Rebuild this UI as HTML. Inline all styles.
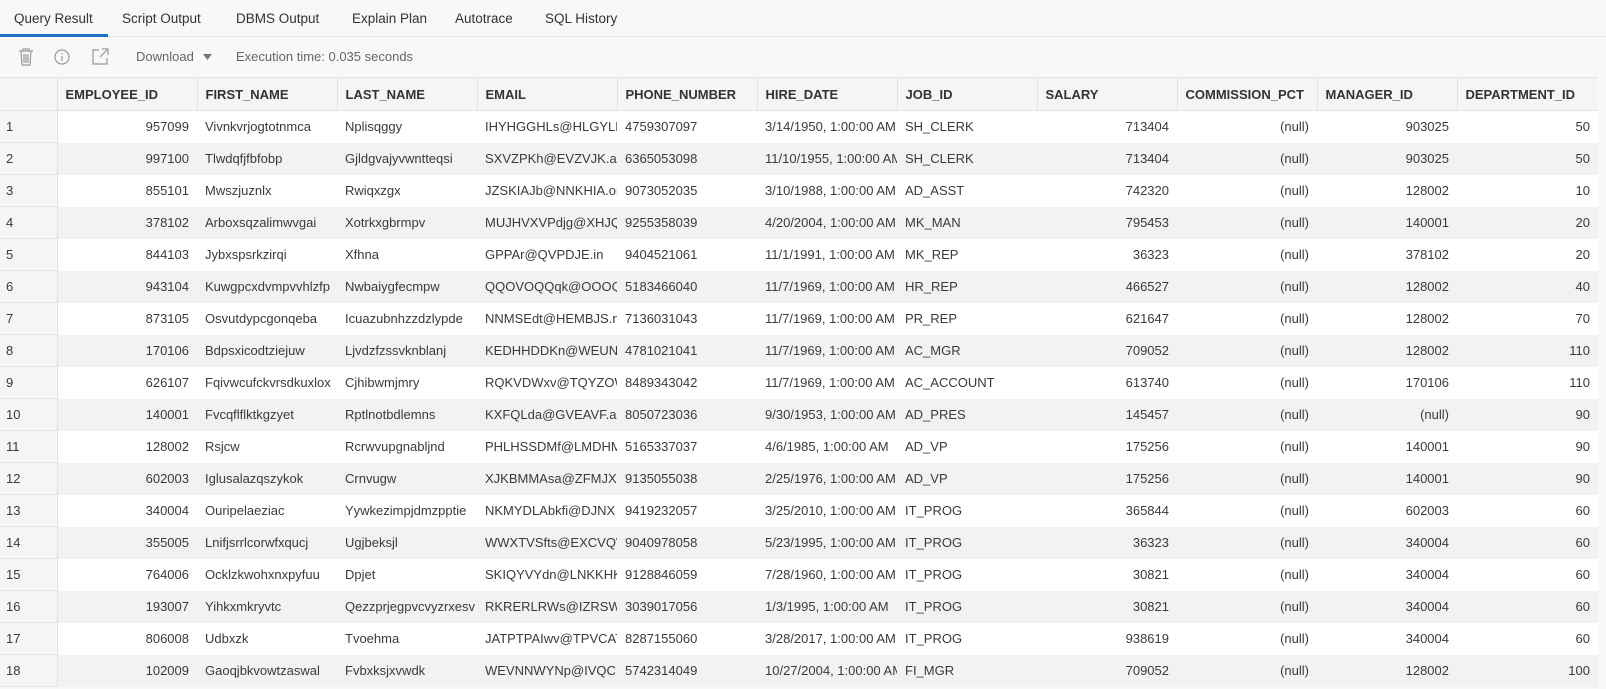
<!DOCTYPE html>
<html><head><meta charset="utf-8"><style>
*{box-sizing:border-box;margin:0;padding:0}
body{width:1606px;height:689px;overflow:hidden;background:#f8f8f8;font-family:"Liberation Sans",sans-serif;color:#333;position:relative}
.tabs{height:37px;border-bottom:1px solid #e4e4e4;position:relative;background:#f8f8f8}
.tab{position:absolute;top:11px;font-size:13.5px;color:#333}
.ul{position:absolute;left:0;top:34px;width:108px;height:3px;background:#1a73c8}
.tb{height:40px;position:relative}
.tb span{position:absolute;top:12px;font-size:13px;color:#666}
table{position:absolute;left:0;top:77px;border-collapse:collapse;table-layout:fixed;width:1598px}
th,td{height:32px;font-size:13px;white-space:nowrap;overflow:hidden;padding:0 8px;text-align:left}
th{background:#f5f5f5;font-weight:bold;color:#333;border-left:1px solid #e2e2e2;border-top:1px solid #e2e2e2;border-bottom:1px solid #e2e2e2;height:33px}
th:first-child{border-left:none}
td{background:#fff;color:#3a3a3a}
tr:nth-child(odd) td{background:#f2f2f2}
td:first-child{background:#f5f5f5 !important;border-bottom:1px solid #e2e2e2;border-right:1px solid #e2e2e2;padding-left:6px}
td.r{text-align:right}
</style></head><body>
<div class="tabs">
<span class="tab" style="left:14px">Query Result</span>
<span class="tab" style="left:122px">Script Output</span>
<span class="tab" style="left:236px">DBMS Output</span>
<span class="tab" style="left:352px">Explain Plan</span>
<span class="tab" style="left:455px">Autotrace</span>
<span class="tab" style="left:545px">SQL History</span>
<div class="ul"></div>
</div>
<div class="tb">
<svg style="position:absolute;left:18px;top:11px" width="16" height="18" viewBox="0 0 16 18" fill="none" stroke="#999" stroke-width="1.2"><path d="M1 3h14M5 3V1h6v2M3 3l1 14h8l1-14M6 6v9M8 6v9M10 6v9"/></svg>
<svg style="position:absolute;left:54px;top:12px" width="16" height="16" viewBox="0 0 16 16" fill="none" stroke="#999" stroke-width="1.2"><circle cx="8" cy="8" r="7"/><path d="M8 7v5M8 4v1.5"/></svg>
<svg style="position:absolute;left:92px;top:11px" width="17" height="17" viewBox="0 0 17 17" fill="none" stroke="#999" stroke-width="1.2"><path d="M7 2H1v14h14v-6M10 1h6v6M16 1L8 9"/></svg>
<span style="left:136px">Download</span>
<svg style="position:absolute;left:203px;top:17px" width="9" height="6"><path d="M0 0h9L4.5 6z" fill="#777"/></svg>
<span style="left:236px">Execution time: 0.035 seconds</span>
</div>
<table>
<colgroup><col style="width:57px"><col style="width:140px"><col style="width:140px"><col style="width:140px"><col style="width:140px"><col style="width:140px"><col style="width:140px"><col style="width:140px"><col style="width:140px"><col style="width:140px"><col style="width:140px"><col style="width:141px"></colgroup>
<tr><th></th><th>EMPLOYEE_ID</th><th>FIRST_NAME</th><th>LAST_NAME</th><th>EMAIL</th><th>PHONE_NUMBER</th><th>HIRE_DATE</th><th>JOB_ID</th><th>SALARY</th><th>COMMISSION_PCT</th><th>MANAGER_ID</th><th>DEPARTMENT_ID</th></tr>
<tr><td>1</td><td class="r">957099</td><td>Vivnkvrjogtotnmca</td><td>Nplisqggy</td><td>IHYHGGHLs@HLGYLHW</td><td>4759307097</td><td>3/14/1950, 1:00:00 AM</td><td>SH_CLERK</td><td class="r">713404</td><td class="r">(null)</td><td class="r">903025</td><td class="r">50</td></tr>
<tr><td>2</td><td class="r">997100</td><td>Tlwdqfjfbfobp</td><td>Gjldgvajyvwntteqsi</td><td>SXVZPKh@EVZVJK.au</td><td>6365053098</td><td>11/10/1955, 1:00:00 AM</td><td>SH_CLERK</td><td class="r">713404</td><td class="r">(null)</td><td class="r">903025</td><td class="r">50</td></tr>
<tr><td>3</td><td class="r">855101</td><td>Mwszjuznlx</td><td>Rwiqxzgx</td><td>JZSKIAJb@NNKHIA.org</td><td>9073052035</td><td>3/10/1988, 1:00:00 AM</td><td>AD_ASST</td><td class="r">742320</td><td class="r">(null)</td><td class="r">128002</td><td class="r">10</td></tr>
<tr><td>4</td><td class="r">378102</td><td>Arboxsqzalimwvgai</td><td>Xotrkxgbrmpv</td><td>MUJHVXVPdjg@XHJQ</td><td>9255358039</td><td>4/20/2004, 1:00:00 AM</td><td>MK_MAN</td><td class="r">795453</td><td class="r">(null)</td><td class="r">140001</td><td class="r">20</td></tr>
<tr><td>5</td><td class="r">844103</td><td>Jybxspsrkzirqi</td><td>Xfhna</td><td>GPPAr@QVPDJE.in</td><td>9404521061</td><td>11/1/1991, 1:00:00 AM</td><td>MK_REP</td><td class="r">36323</td><td class="r">(null)</td><td class="r">378102</td><td class="r">20</td></tr>
<tr><td>6</td><td class="r">943104</td><td>Kuwgpcxdvmpvvhlzfp</td><td>Nwbaiygfecmpw</td><td>QQOVOQQqk@OOOQ</td><td>5183466040</td><td>11/7/1969, 1:00:00 AM</td><td>HR_REP</td><td class="r">466527</td><td class="r">(null)</td><td class="r">128002</td><td class="r">40</td></tr>
<tr><td>7</td><td class="r">873105</td><td>Osvutdypcgonqeba</td><td>Icuazubnhzzdzlypde</td><td>NNMSEdt@HEMBJS.net</td><td>7136031043</td><td>11/7/1969, 1:00:00 AM</td><td>PR_REP</td><td class="r">621647</td><td class="r">(null)</td><td class="r">128002</td><td class="r">70</td></tr>
<tr><td>8</td><td class="r">170106</td><td>Bdpsxicodtziejuw</td><td>Ljvdzfzssvknblanj</td><td>KEDHHDDKn@WEUNW</td><td>4781021041</td><td>11/7/1969, 1:00:00 AM</td><td>AC_MGR</td><td class="r">709052</td><td class="r">(null)</td><td class="r">128002</td><td class="r">110</td></tr>
<tr><td>9</td><td class="r">626107</td><td>Fqivwcufckvrsdkuxlox</td><td>Cjhibwmjmry</td><td>RQKVDWxv@TQYZOW</td><td>8489343042</td><td>11/7/1969, 1:00:00 AM</td><td>AC_ACCOUNT</td><td class="r">613740</td><td class="r">(null)</td><td class="r">170106</td><td class="r">110</td></tr>
<tr><td>10</td><td class="r">140001</td><td>Fvcqflflktkgzyet</td><td>Rptlnotbdlemns</td><td>KXFQLda@GVEAVF.au</td><td>8050723036</td><td>9/30/1953, 1:00:00 AM</td><td>AD_PRES</td><td class="r">145457</td><td class="r">(null)</td><td class="r">(null)</td><td class="r">90</td></tr>
<tr><td>11</td><td class="r">128002</td><td>Rsjcw</td><td>Rcrwvupgnabljnd</td><td>PHLHSSDMf@LMDHM</td><td>5165337037</td><td>4/6/1985, 1:00:00 AM</td><td>AD_VP</td><td class="r">175256</td><td class="r">(null)</td><td class="r">140001</td><td class="r">90</td></tr>
<tr><td>12</td><td class="r">602003</td><td>Iglusalazqszykok</td><td>Crnvugw</td><td>XJKBMMAsa@ZFMJX</td><td>9135055038</td><td>2/25/1976, 1:00:00 AM</td><td>AD_VP</td><td class="r">175256</td><td class="r">(null)</td><td class="r">140001</td><td class="r">90</td></tr>
<tr><td>13</td><td class="r">340004</td><td>Ouripelaeziac</td><td>Yywkezimpjdmzpptie</td><td>NKMYDLAbkfi@DJNX</td><td>9419232057</td><td>3/25/2010, 1:00:00 AM</td><td>IT_PROG</td><td class="r">365844</td><td class="r">(null)</td><td class="r">602003</td><td class="r">60</td></tr>
<tr><td>14</td><td class="r">355005</td><td>Lnifjsrrlcorwfxqucj</td><td>Ugjbeksjl</td><td>WWXTVSfts@EXCVQV</td><td>9040978058</td><td>5/23/1995, 1:00:00 AM</td><td>IT_PROG</td><td class="r">36323</td><td class="r">(null)</td><td class="r">340004</td><td class="r">60</td></tr>
<tr><td>15</td><td class="r">764006</td><td>Ocklzkwohxnxpyfuu</td><td>Dpjet</td><td>SKIQYVYdn@LNKKHK</td><td>9128846059</td><td>7/28/1960, 1:00:00 AM</td><td>IT_PROG</td><td class="r">30821</td><td class="r">(null)</td><td class="r">340004</td><td class="r">60</td></tr>
<tr><td>16</td><td class="r">193007</td><td>Yihkxmkryvtc</td><td>Qezzprjegpvcvyzrxesv</td><td>RKRERLRWs@IZRSWH</td><td>3039017056</td><td>1/3/1995, 1:00:00 AM</td><td>IT_PROG</td><td class="r">30821</td><td class="r">(null)</td><td class="r">340004</td><td class="r">60</td></tr>
<tr><td>17</td><td class="r">806008</td><td>Udbxzk</td><td>Tvoehma</td><td>JATPTPAIwv@TPVCAT</td><td>8287155060</td><td>3/28/2017, 1:00:00 AM</td><td>IT_PROG</td><td class="r">938619</td><td class="r">(null)</td><td class="r">340004</td><td class="r">60</td></tr>
<tr><td>18</td><td class="r">102009</td><td>Gaoqjbkvowtzaswal</td><td>Fvbxksjxvwdk</td><td>WEVNNWYNp@IVQC</td><td>5742314049</td><td>10/27/2004, 1:00:00 AM</td><td>FI_MGR</td><td class="r">709052</td><td class="r">(null)</td><td class="r">128002</td><td class="r">100</td></tr>
</table>
</body></html>
